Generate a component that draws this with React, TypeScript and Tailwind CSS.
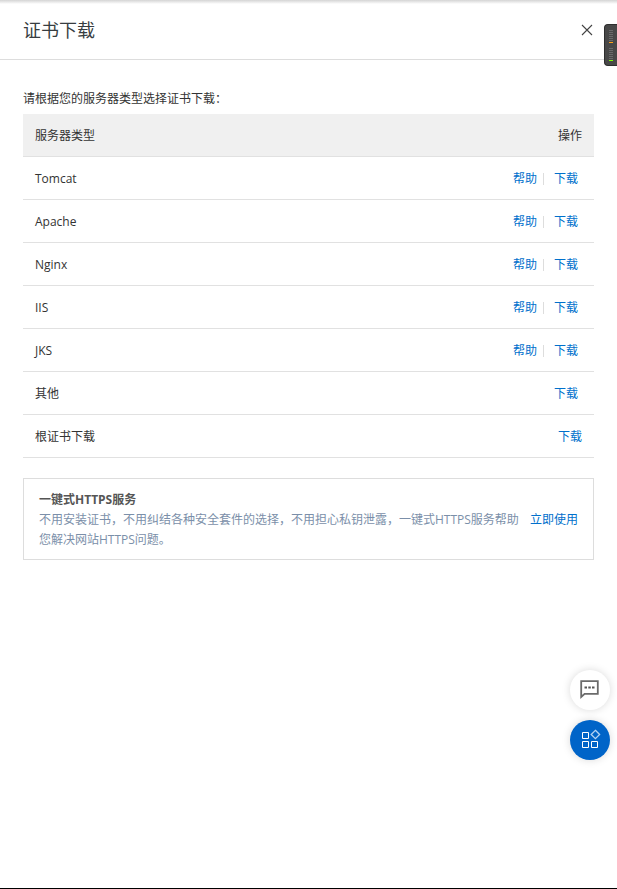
import { useState } from 'react';

type ServerRow = {
  name: string;
  help?: boolean;
  root?: boolean;
};

const servers: ServerRow[] = [
  { name: 'Tomcat', help: true },
  { name: 'Apache', help: true },
  { name: 'Nginx', help: true },
  { name: 'IIS', help: true },
  { name: 'JKS', help: true },
  { name: '其他' },
  { name: '根证书下载', root: true },
];

const linkClass = 'text-[#0070cc] hover:underline';
const cellClass = 'border-b border-[#e1e1e1] pt-3 pb-[10px]';

function CloseIcon() {
  return (
    <svg
      viewBox="0 0 12 12"
      className="size-3"
      fill="none"
      stroke="#444"
      strokeWidth="1.1"
      aria-hidden="true"
    >
      <path d="M1 1l10 10M11 1L1 11" />
    </svg>
  );
}

function ChatIcon() {
  return (
    <svg viewBox="0 0 20 20" className="size-5" fill="none" aria-hidden="true">
      <path
        d="M1.2 1.2h16.6v12.6H4.6L1.2 17z"
        stroke="#6b6b6b"
        strokeWidth="1.8"
      />
      <path d="M4.5 6.5h2.5v2H4.5zM8.3 6.5h2.5v2H8.3zM12 6.5h2.5v2H12z" fill="#555" />
    </svg>
  );
}

function AppsIcon() {
  return (
    <svg
      viewBox="0 0 20 20"
      className="size-5 overflow-visible"
      fill="none"
      stroke="#fff"
      aria-hidden="true"
    >
      <path d="M2.5 2.5h6v6h-6zM2.5 11.5h6v6h-6zM11.5 11.5h6v6h-6z" />
      <path
        d="M15.4.3l4.2 4.2-4.2 4.2-4.2-4.2z"
        stroke="#b3d1f2"
        strokeWidth="1.3"
      />
    </svg>
  );
}

function MeterIcon() {
  return (
    <svg viewBox="0 -1 4 32" className="h-8 w-1" aria-hidden="true">
      <path
        d="M0 .5h4M0 2.5h4M0 4.5h4M0 6.5h4M0 8.5h4M0 10.5h4M0 18.5h4M0 20.5h4M0 22.5h4M0 24.5h4M0 26.5h4M0 28.5h4"
        stroke="#6a6a6a"
      />
      <path d="M0 12.5h4" stroke="#ffa317" />
      <path d="M0 30.5h4" stroke="#7dff00" />
    </svg>
  );
}

function ServerTable() {
  return (
    <table className="mt-[5px] w-full border-separate border-spacing-0 text-left">
      <thead>
        <tr className="bg-[#f0f0f0]">
          <th className={`px-3 font-normal ${cellClass}`}>服务器类型</th>
          <th className={`px-3 text-right font-normal ${cellClass}`}>操作</th>
        </tr>
      </thead>
      <tbody>
        {servers.map((server) => (
          <tr key={server.name}>
            <td className={`px-3 ${cellClass}`}>{server.name}</td>
            <td className={`${server.root ? 'px-3' : 'px-4'} ${cellClass}`}>
              <div className="flex items-center justify-end">
                {server.help && (
                  <>
                    <a href="#help" className={linkClass}>
                      帮助
                    </a>
                    <span className="mr-[10px] ml-[6px] h-3 w-px bg-[#ddd]" />
                  </>
                )}
                <a href="#download" className={linkClass}>
                  下载
                </a>
              </div>
            </td>
          </tr>
        ))}
      </tbody>
    </table>
  );
}

export default function App() {
  const [open, setOpen] = useState(true);

  return (
    <div className="flex min-h-screen flex-col border-b border-black bg-white font-['Open_Sans','Noto_Sans_CJK_SC',sans-serif] text-xs leading-5 text-[#333]">
      <div className="h-1 bg-linear-to-b from-[#d4d4d4] to-white" />
      {open && (
        <section aria-labelledby="dialog-title">
          <header className="flex h-14 items-center justify-between border-b border-[#ddd] pr-6 pb-1 pl-[23px]">
            <h1 id="dialog-title" className="text-lg leading-6 text-[#373d41]">
              证书下载
            </h1>
            <button type="button" aria-label="关闭" onClick={() => setOpen(false)}>
              <CloseIcon />
            </button>
          </header>
          <div className="px-[23px] pt-[29px]">
            <p>请根据您的服务器类型选择证书下载：</p>
            <ServerTable />
            <div className="mt-5 border border-[#ddd] px-[15px] pt-[11px] pb-[9px]">
              <h2 className="font-bold text-[#555]">一键式HTTPS服务</h2>
              <div className="flex items-start justify-between gap-2">
                <p className="text-[#7b8fa9]">
                  不用安装证书，不用纠结各种安全套件的选择，不用担心私钥泄露，一键式HTTPS服务帮助您解决网站HTTPS问题。
                </p>
                <a href="#https" className={`shrink-0 ${linkClass}`}>
                  立即使用
                </a>
              </div>
            </div>
          </div>
        </section>
      )}

      <div className="fixed top-6 right-0 flex h-[42px] w-[13px] items-center justify-center rounded-l-sm border border-r-0 border-[#2e2e2e] bg-[#484848]">
        <MeterIcon />
      </div>

      <div className="fixed right-[7px] bottom-[129px] flex flex-col gap-[10px]">
        <button
          type="button"
          aria-label="咨询"
          className="flex size-10 items-center justify-center rounded-full bg-white shadow-[0_0_8px_rgba(0,0,0,0.15)]"
        >
          <ChatIcon />
        </button>
        <button
          type="button"
          aria-label="应用"
          className="flex size-10 items-center justify-center rounded-full bg-[#0064c8] shadow-[0_0_8px_rgba(0,0,0,0.15)]"
        >
          <AppsIcon />
        </button>
      </div>
    </div>
  );
}
